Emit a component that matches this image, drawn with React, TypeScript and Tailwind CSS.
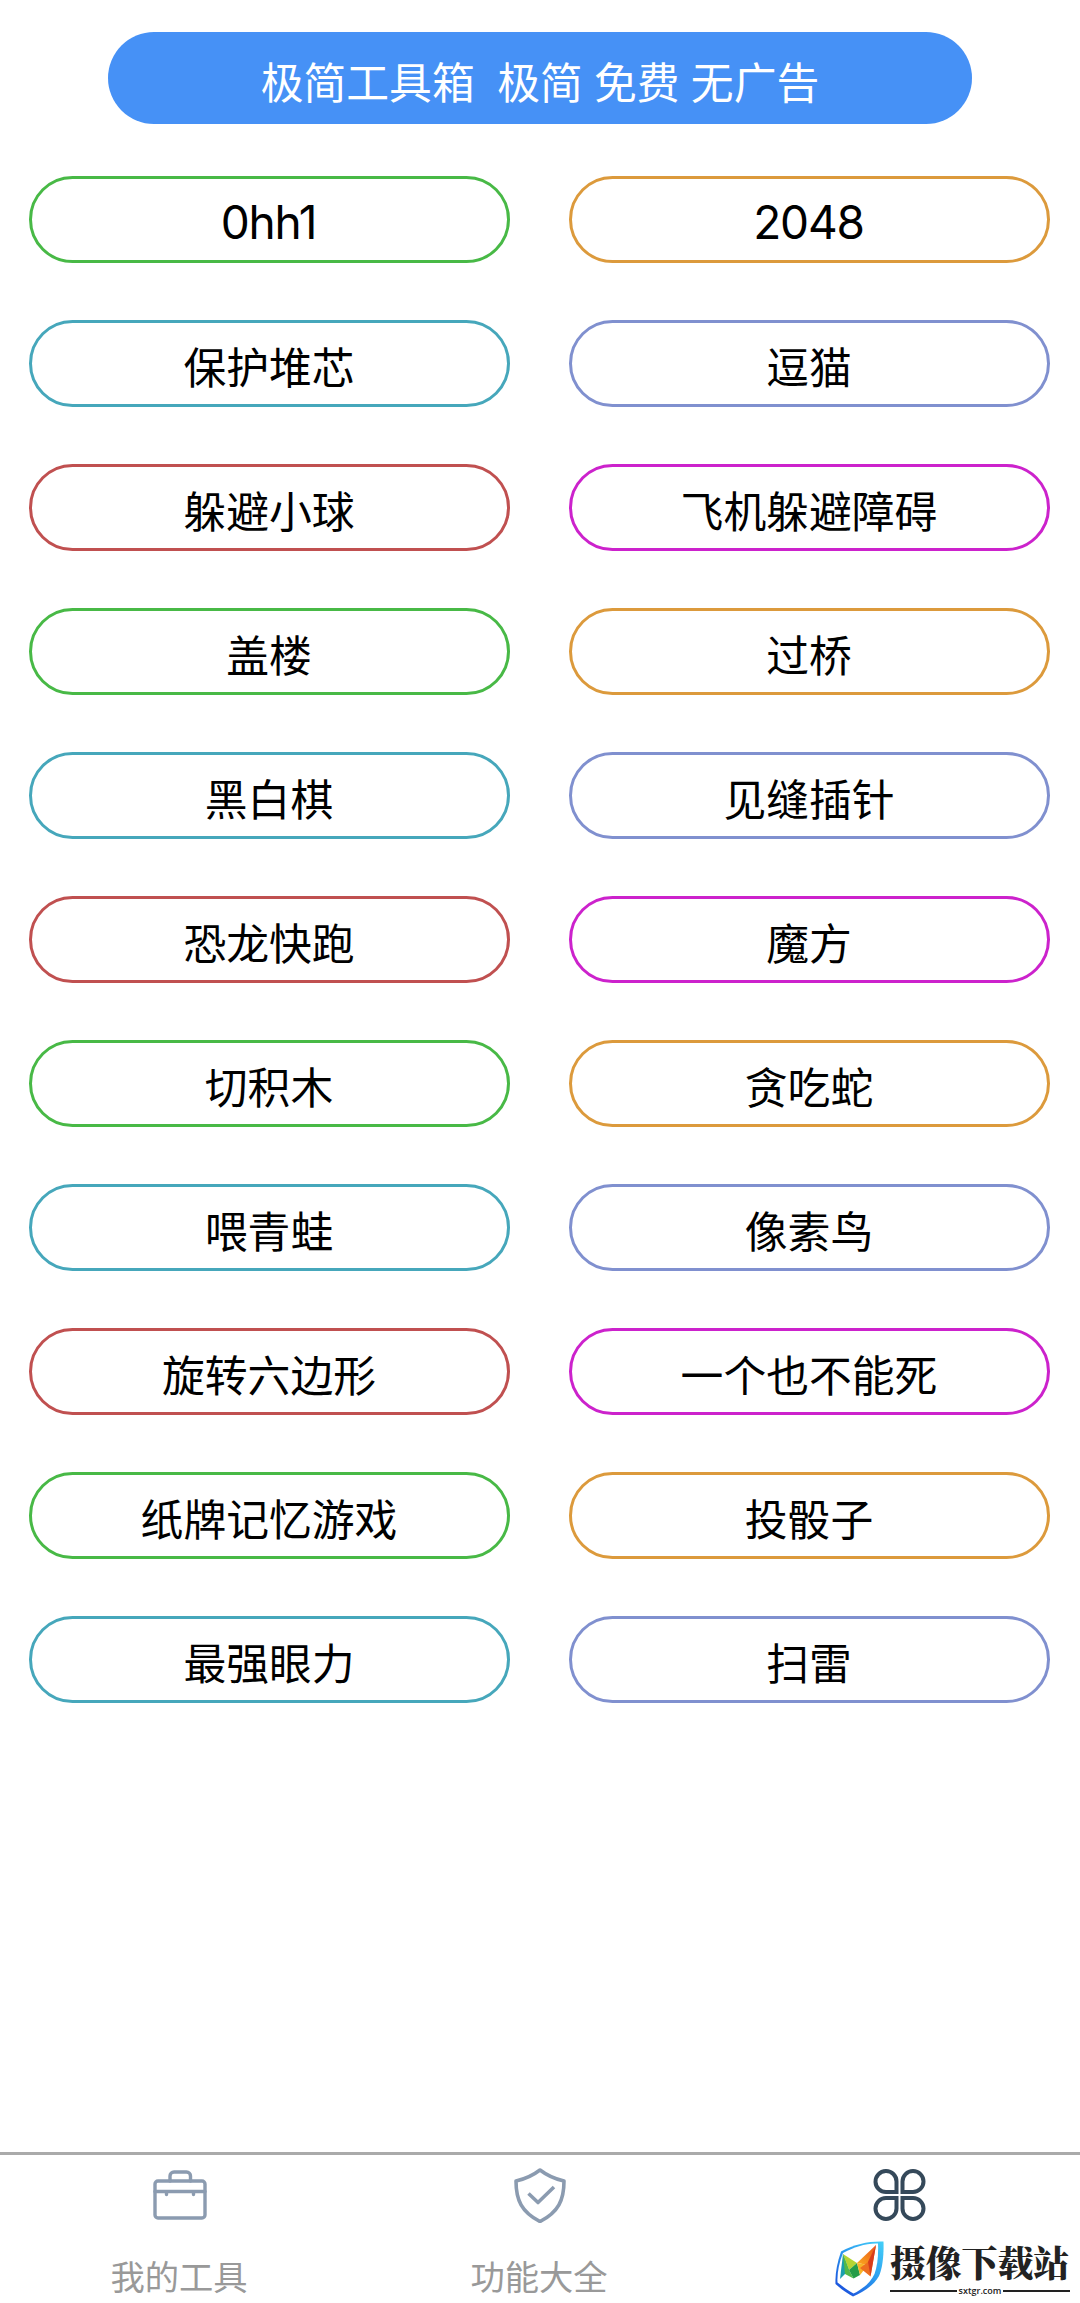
const COLORS = {
  green: "border-[#48b946]",
  orange: "border-[#dc9a3c]",
  teal: "border-[#46a7bb]",
  indigo: "border-[#8090cf]",
  red: "border-[#c05050]",
  magenta: "border-[#cc22cc]",
};

type Color = keyof typeof COLORS;

interface Game {
  name: string;
  color: Color;
}

const games: Game[] = [
  { name: "0hh1", color: "green" },
  { name: "2048", color: "orange" },
  { name: "保护堆芯", color: "teal" },
  { name: "逗猫", color: "indigo" },
  { name: "躲避小球", color: "red" },
  { name: "飞机躲避障碍", color: "magenta" },
  { name: "盖楼", color: "green" },
  { name: "过桥", color: "orange" },
  { name: "黑白棋", color: "teal" },
  { name: "见缝插针", color: "indigo" },
  { name: "恐龙快跑", color: "red" },
  { name: "魔方", color: "magenta" },
  { name: "切积木", color: "green" },
  { name: "贪吃蛇", color: "orange" },
  { name: "喂青蛙", color: "teal" },
  { name: "像素鸟", color: "indigo" },
  { name: "旋转六边形", color: "red" },
  { name: "一个也不能死", color: "magenta" },
  { name: "纸牌记忆游戏", color: "green" },
  { name: "投骰子", color: "orange" },
  { name: "最强眼力", color: "teal" },
  { name: "扫雷", color: "indigo" },
];

function GameButton({ name, color }: Game) {
  // latin names are set slightly larger than the chinese ones
  const isLatin = /^\w+$/.test(name);

  return (
    <button
      className={`flex h-[87px] items-center justify-center rounded-full border-3 leading-none text-black ${
        isLatin
          ? "pt-[5px] pr-0.5 text-[46px] tracking-[-1.2px]"
          : "pt-3 pr-px text-[42.800px]"
      } ${COLORS[color]}`}
    >
      {name}
    </button>
  );
}

function ToolboxIcon() {
  return (
    <svg
      className="h-[60px] w-[60px]"
      viewBox="0 0 60 60"
      fill="none"
      stroke="#8b9bb0"
      strokeWidth="3.4"
      strokeLinecap="round"
      strokeLinejoin="round"
    >
      <rect x="5" y="18" width="50" height="37" rx="3" />
      <path d="M20 18v-5a4 4 0 0 1 4-4h12.500a4 4 0 0 1 4 4v5M5 28.500h50M16.500 28.500v3M43.500 28.500v3" />
    </svg>
  );
}

function ShieldIcon() {
  return (
    <svg
      className="h-[60px] w-[60px]"
      viewBox="0 0 60 60"
      fill="none"
      stroke="#8b9bb0"
      strokeWidth="3.6"
      strokeLinejoin="round"
    >
      <path d="M30 7C23.500 12 15 16 6 18C6 37 11.500 49 30 58.500C48.500 49 54 37 54 18C45 16 36.500 12 30 7Z" />
      <path d="M18.500 30.500l9.500 9L44 24" />
    </svg>
  );
}

function CloverIcon() {
  return (
    <svg
      className="h-[60px] w-[60px]"
      viewBox="0 0 60 60"
      fill="none"
      stroke="#35495a"
      strokeWidth="4"
    >
      <path d="M26.500 29H16.500A10.500 10.500 0 1 1 26.500 18.500Z" />
      <path d="M32.500 29V18.500A10.500 10.500 0 1 1 43 29Z" />
      <path d="M26.500 35V45.500A10.500 10.500 0 1 1 16 35Z" />
      <path d="M32.500 35H43A10.500 10.500 0 1 1 32.500 45.500Z" />
    </svg>
  );
}

function SiteLogo() {
  return (
    <svg className="h-14 w-[50px] shrink-0" viewBox="0 0 50 56">
      <defs>
        <linearGradient id="shield" x1="1" y1="0" x2="0.2" y2="1">
          <stop offset="0" stopColor="#45d0f8" />
          <stop offset="0.5" stopColor="#2b9cf0" />
          <stop offset="1" stopColor="#1b50dc" />
        </linearGradient>
        <linearGradient id="orange" x1="1" y1="0" x2="0.3" y2="1">
          <stop offset="0" stopColor="#e8501c" />
          <stop offset="1" stopColor="#f9a01e" />
        </linearGradient>
      </defs>
      <path
        d="M48.500 0.500C34 0 20 3 6 10.500C2 22 0 33 0.500 43C6 48 13 53 18 55.500C29 51 39 44 44 35C47.500 27 49 14 48.500 0.500Z"
        fill="url(#shield)"
      />
      <path
        d="M43 2.500C31 2 19 6 8 12C4 22 2 32 2.500 41.500C8 46 14 50 18.500 52.500C28 48 36 41 39.500 33C42.500 25 43.500 14 43 2.500Z"
        fill="#fff"
      />
      <path d="M8 13L5 38L14 29Z" fill="#1b9fae" />
      <path d="M8 13L22 22L14 29Z" fill="#b5d433" />
      <path d="M8 13L10 33L18.500 37.500L14 29Z" fill="#53b947" />
      <path d="M14 29L22 22L25 34L18.500 37.500Z" fill="#259c48" />
      <path d="M22 22L41 4L33 24Z" fill="url(#orange)" />
      <path d="M22 22L33 24L25 34Z" fill="#f7b327" />
      <path d="M41 4L35.500 35.500L25 27L33 21Z" fill="#ee6f20" />
      <path d="M41 4L35.500 35.500L33 21Z" fill="#d83d1c" />
    </svg>
  );
}

function Watermark() {
  return (
    <div className="absolute right-0 bottom-0 flex h-[67px] w-[250px] bg-white pt-[5px] pl-[5px]">
      <SiteLogo />
      <div className="ml-[5px] flex w-[180px] flex-col">
        <span className="font-['Noto_Serif_CJK_SC','Noto_Sans_CJK_SC',serif] text-[35.800px] leading-[42px] font-black whitespace-nowrap text-[#222]">
          摄像下载站
        </span>
        <div className="mt-0.5 flex items-center gap-0.5">
          <span className="h-0.5 grow bg-[#222]" />
          <span className="font-['Open_Sans',sans-serif] text-[9px] leading-3 font-semibold text-[#222]">
            sxtgr.com
          </span>
          <span className="h-0.5 grow bg-[#222]" />
        </div>
      </div>
    </div>
  );
}

export default function App() {
  return (
    <div className="relative flex h-[2303px] w-[1080px] flex-col bg-white font-[Inter,'Noto_Sans_CJK_SC',sans-serif]">
      <header className="mx-auto mt-8 flex h-[92px] w-[864px] items-center justify-center rounded-full bg-[#4691f6] pt-3 text-[42.800px] leading-none [word-spacing:-0.8px] whitespace-pre text-white">
        极简工具箱{"  "}极简 免费 无广告
      </header>
      <main className="mt-[52px] grid grow grid-cols-2 content-start gap-x-[59px] gap-y-[57px] pr-[30px] pl-[29px]">
        {games.map((game) => (
          <GameButton key={game.name} {...game} />
        ))}
      </main>
      <nav className="grid h-[151px] grid-cols-3 border-t-3 border-[#aaa] text-[34.300px] leading-none text-[#999]">
        <div className="flex flex-col items-center gap-[38px] pt-2">
          <ToolboxIcon />
          <span className="pr-0.5">我的工具</span>
        </div>
        <div className="flex flex-col items-center gap-[38px] pt-2">
          <ShieldIcon />
          <span className="pr-0.5">功能大全</span>
        </div>
        <div className="flex flex-col items-center pt-2">
          <CloverIcon />
        </div>
      </nav>
      <Watermark />
    </div>
  );
}
